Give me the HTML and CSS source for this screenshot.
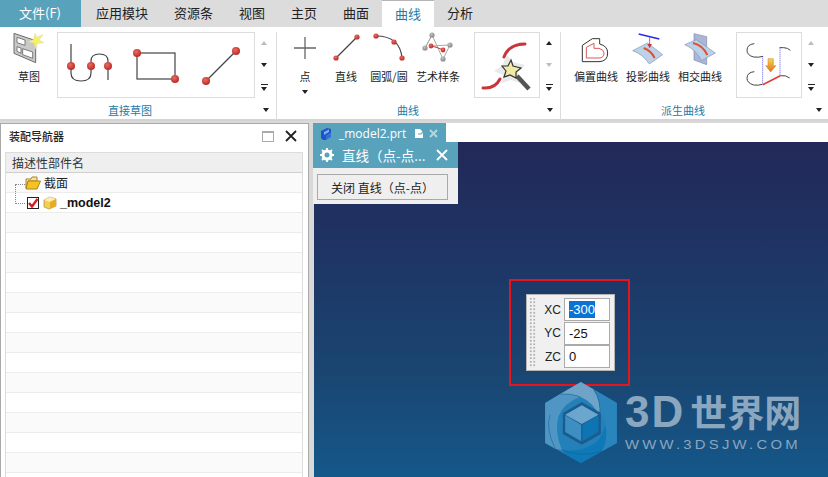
FILE: index.html
```html
<!DOCTYPE html>
<html lang="zh">
<head>
<meta charset="utf-8">
<title>NX 曲线</title>
<link rel="stylesheet" href="styles.css">
</head>
<body>
<svg class="defs" aria-hidden="true"><defs>
<radialGradient id="ball" cx="40%" cy="35%" r="70%"><stop offset="0" stop-color="#ee6a60"/><stop offset="1" stop-color="#b3261f"/></radialGradient>
<radialGradient id="gball" cx="40%" cy="35%" r="70%"><stop offset="0" stop-color="#c4c4c4"/><stop offset="1" stop-color="#808080"/></radialGradient>
<linearGradient id="arrowg" x1="0" y1="0" x2="0" y2="1"><stop offset="0" stop-color="#f7d64c"/><stop offset="1" stop-color="#e2701c"/></linearGradient>
</defs></svg>

<nav class="tabs">
  <div class="tab tab-file">文件(F)</div>
  <div class="tab">应用模块</div>
  <div class="tab">资源条</div>
  <div class="tab">视图</div>
  <div class="tab">主页</div>
  <div class="tab">曲面</div>
  <div class="tab tab-active">曲线</div>
  <div class="tab">分析</div>
</nav>

<section class="ribbon">
  <div class="group group-a">
    <div class="group-body">
      <div class="tool tool-sketch">
        <svg class="icon" width="32" height="32" viewBox="42 96 96 96">
          <path d="M45 100 110 122V188L45 160Z" fill="#c9c9c9" stroke="#6d6d6d" stroke-width="3"/>
          <path d="M54 112 78 120V136L54 128ZM54 140 66 144V160L54 154ZM71 146 101 156V175L71 164Z" fill="#fff" stroke="#666" stroke-width="2.5"/>
          <path d="M108 100 113 112 132 104 120 120 134 128 116 130 108 148 106 130 88 126 104 118Z" fill="#f5f06a" stroke="#d8d4a8" stroke-width="1.5"/>
        </svg>
        <span class="tool-label">草图</span>
      </div>
      <div class="gallery gallery-a">
        <svg width="196" height="64" viewBox="0 0 196 64">
          <path d="M13 11V40Q13 48 23 48Q33 48 33 40V28Q33 21 41.5 21Q50 21 50 28V47" fill="none" stroke="#444" stroke-width="1.2"/>
          <circle cx="13" cy="33" r="4" fill="url(#ball)"/><circle cx="33" cy="33" r="4" fill="url(#ball)"/><circle cx="50" cy="33" r="4" fill="url(#ball)"/>
          <rect x="79" y="20" width="38" height="26" fill="none" stroke="#444" stroke-width="1.2"/>
          <circle cx="79" cy="20" r="4" fill="url(#ball)"/><circle cx="117" cy="46" r="4" fill="url(#ball)"/>
          <path d="M148 48 178 18" stroke="#444" stroke-width="1.2"/>
          <circle cx="148" cy="48" r="4" fill="url(#ball)"/><circle cx="178" cy="18" r="4" fill="url(#ball)"/>
        </svg>
      </div>
      <div class="scroller">
        <i class="arrow-up dim"></i><i class="arrow-down"></i><i class="arrow-more"></i>
      </div>
    </div>
    <div class="group-foot foot-a"><span class="group-label">直接草图</span><i class="arrow-down launcher"></i></div>
  </div>

  <div class="group group-b">
    <div class="group-body">
      <div class="tool tool-point">
        <svg class="icon" width="30" height="30" viewBox="0 0 30 30"><path d="M15 4V26M4 15H26" stroke="#666" stroke-width="1.3"/></svg>
        <span class="tool-label">点</span>
        <i class="arrow-down tool-drop"></i>
      </div>
      <div class="tool tool-line">
        <svg class="icon" width="30" height="30" viewBox="0 0 30 30"><path d="M5 26 26 5" stroke="#444" stroke-width="1.2"/><circle cx="5" cy="26" r="2.6" fill="url(#ball)"/><circle cx="26" cy="5" r="2.6" fill="url(#ball)"/></svg>
        <span class="tool-label">直线</span>
      </div>
      <div class="tool tool-arc">
        <svg class="icon" width="34" height="30" viewBox="0 0 34 30"><path d="M4 4Q28 4 30 26" fill="none" stroke="#444" stroke-width="1.2"/><circle cx="4" cy="4" r="2.6" fill="url(#ball)"/><circle cx="22" cy="10" r="2.6" fill="url(#ball)"/><circle cx="30" cy="26" r="2.6" fill="url(#ball)"/></svg>
        <span class="tool-label">圆弧/圆</span>
      </div>
      <div class="tool tool-spline">
        <svg class="icon" width="34" height="30" viewBox="0 0 34 30"><path d="M4 16 11 3 22 27 29 13 10 14M11 3 4 16" fill="none" stroke="#aaa" stroke-width="1"/><path d="M10 14Q16 15 22 18" fill="none" stroke="#c33" stroke-width="1"/><circle cx="11" cy="3" r="2.6" fill="url(#gball)"/><circle cx="4" cy="16" r="2.6" fill="url(#gball)"/><circle cx="29" cy="13" r="2.6" fill="url(#gball)"/><circle cx="22" cy="27" r="2.6" fill="url(#gball)"/><circle cx="10" cy="14" r="2.4" fill="url(#ball)"/><circle cx="22" cy="18" r="2.4" fill="url(#ball)"/></svg>
        <span class="tool-label">艺术样条</span>
      </div>
      <div class="gallery gallery-b">
        <svg width="64" height="64" viewBox="0 0 64 64">
          <path d="M50 11Q34 11 29 24M25 46Q20 56 8 55" fill="none" stroke="#c8363a" stroke-width="3" stroke-linecap="round"/>
          <path d="M27 33 32 22 38 29 50 32 43 39 46 50 36 47 27 50 28 42 19 38Z" fill="#e9e9ec"/>
          <path d="M42 43 54 56" stroke="#555" stroke-width="4.5"/>
          <path d="M36 27 38 33 46 35 41 39 41 45 35 42 29 44 31 38 27 33 33 33Z" fill="#f1eaa6" stroke="#333" stroke-width="1.2"/>
        </svg>
      </div>
      <div class="scroller">
        <i class="arrow-up"></i><i class="arrow-down dim"></i><i class="arrow-more"></i>
      </div>
    </div>
    <div class="group-foot foot-b"><span class="group-label">曲线</span><i class="arrow-down launcher"></i></div>
  </div>

  <div class="group group-c">
    <div class="group-body">
      <div class="tool tool-offset">
        <svg class="icon" width="30" height="33" viewBox="96 92 90 99">
          <path d="M100 181V132L130 112H152V128Q176 134 176 155Q176 180 150 181Z" fill="#fff" stroke="#333" stroke-width="3"/>
          <path d="M112 170V138L135 126V141H150Q165 145 165 155Q165 170 150 170Z" fill="none" stroke="#d0393c" stroke-width="2.5"/>
        </svg>
        <span class="tool-label">偏置曲线</span>
      </div>
      <div class="tool tool-project">
        <svg class="icon" width="32" height="33" viewBox="248 92 96 99">
          <path d="M250 148 295 125 340 160 300 188Q280 158 250 148Z" fill="#bfd1e8" stroke="#7e95b5" stroke-width="2"/>
          <path d="M268 98 330 113" stroke="#2d2be0" stroke-width="5"/>
          <path d="M301 108V132" stroke="#c43b3b" stroke-width="2.5"/><path d="M294 128H308L301 141Z" fill="#c43b3b"/>
          <path d="M283 140Q305 148 316 170" fill="none" stroke="#e0502c" stroke-width="6"/>
        </svg>
        <span class="tool-label">投影曲线</span>
      </div>
      <div class="tool tool-cross">
        <svg class="icon" width="32" height="33" viewBox="403 92 96 99">
          <path d="M433 97 471 106V190L433 176Z" fill="#a9b6d4" stroke="#7d8cb0" stroke-width="2"/>
          <path d="M405 130 440 115 497 155 455 178Q440 145 405 130Z" fill="#bcd0e8" stroke="#7e95b5" stroke-width="2"/>
          <path d="M430 125Q460 132 473 161" fill="none" stroke="#e0502c" stroke-width="6"/>
        </svg>
        <span class="tool-label">相交曲线</span>
      </div>
      <div class="gallery gallery-c">
        <svg width="64" height="64" viewBox="560 98 192 192">
          <path d="M638 168Q625 172 610 170Q590 165 590 150Q590 132 612 130M688 142H700Q712 142 720 150M636 252Q625 256 610 254Q590 248 590 234Q590 216 612 214M690 226Q708 224 718 233" fill="none" stroke="#444" stroke-width="3"/>
          <path d="M637 168V252M689 142V226" stroke="#3a3ae0" stroke-width="2.5" stroke-dasharray="3 3"/>
          <path d="M637 253 690 226" stroke="#e23b3b" stroke-width="5"/>
          <path d="M653 175H669V196H677L661 215 646 196H653Z" fill="url(#arrowg)" stroke="#c9802c" stroke-width="1.5"/>
        </svg>
      </div>
      <div class="scroller">
        <i class="arrow-up dim"></i><i class="arrow-down"></i><i class="arrow-more"></i>
      </div>
    </div>
    <div class="group-foot foot-c"><span class="group-label">派生曲线</span><i class="arrow-down launcher"></i></div>
  </div>
</section>

<main class="workspace">
  <aside class="navigator">
    <header class="nav-head">
      <span class="nav-title">装配导航器</span>
      <span class="nav-max"></span>
      <svg class="nav-close" width="12" height="12" viewBox="0 0 12 12"><path d="M1 1 11 11M11 1 1 11" stroke="#222" stroke-width="1.8"/></svg>
    </header>
    <div class="tree">
      <div class="tree-head">描述性部件名</div>
      <div class="tree-lines"></div>
      <div class="row">
        <svg class="folder" width="16" height="14" viewBox="0 0 16 14"><path d="M1 3H6L7 1H12V5H3L1 12Z" fill="#f7e39a" stroke="#a8842a"/><path d="M3 5H15.500L12 13H1Z" fill="#f8c21c" stroke="#a8842a"/></svg>
        <span>截面</span>
      </div>
      <div class="row row-model">
        <span class="check"><svg width="10" height="10" viewBox="0 0 10 10"><path d="M1 5 4 8.500 9.500 1" fill="none" stroke="#e0141c" stroke-width="2.400"/></svg></span>
        <svg class="cube" width="14" height="14" viewBox="0 0 14 14"><path d="M7 1 13 3V10L6 13 1 11V4Z" fill="#f5cc56" stroke="#b59a4a" stroke-width=".8"/><path d="M1 4 7 6 13 3 7 1Z" fill="#fbeeb0"/><path d="M7 6V13L13 10V3Z" fill="#e6ad24"/></svg>
        <b>_model2</b>
      </div>
      <div class="row"></div><div class="row"></div><div class="row"></div><div class="row"></div><div class="row"></div><div class="row"></div><div class="row"></div><div class="row"></div><div class="row"></div><div class="row"></div><div class="row"></div><div class="row"></div><div class="row"></div>
    </div>
  </aside>

  <section class="stage">
    <div class="doc-bar">
      <div class="doc-tab">
        <svg class="doc-icon" width="14" height="14" viewBox="0 0 14 14"><path d="M2 4 8 1 12 2 12 6 7 9V13H4L2 11Z" fill="#1f54c8"/><path d="M5 5 10 2.500V5L5 8Z" fill="#7fb2ef"/><path d="M7 9 12 6.500V10L7 13Z" fill="#2f6fe0"/></svg>
        <span class="doc-name">_model2.prt</span>
        <svg class="doc-save" width="10" height="11" viewBox="0 0 10 11"><path d="M1 1H6L9 4V10H1Z" fill="#fff"/><path d="M4 6H7L9 3.500" stroke="#5ba3bd" fill="none" stroke-width="1.200"/></svg>
        <svg class="doc-close" width="9" height="9" viewBox="0 0 9 9"><path d="M1 1 8 8M8 1 1 8" stroke="#b9d3dd" stroke-width="2"/></svg>
      </div>
    </div>
    <div class="viewport">
      <div class="command">
        <div class="command-head">
          <svg width="14" height="14" viewBox="0 0 14 14"><circle cx="7" cy="7" r="4" fill="none" stroke="#fff" stroke-width="3"/><path d="M7 0V3M7 11V14M0 7H3M11 7H14M2 2 4 4M10 10 12 12M12 2 10 4M4 10 2 12" stroke="#fff" stroke-width="1.800"/></svg>
          <span class="command-title">直线（点-点...</span>
          <svg class="command-close" width="12" height="12" viewBox="0 0 12 12"><path d="M1 1 11 11M11 1 1 11" stroke="#fff" stroke-width="1.800"/></svg>
        </div>
        <div class="command-body"><button class="command-btn" type="button">关闭 直线（点-点）</button></div>
      </div>

      <div class="highlight"></div>

      <div class="coords">
        <div class="grip"></div>
        <div class="coord-rows">
          <div class="coord"><span class="coord-label">XC</span><span class="coord-input"><span class="selected">-300</span></span></div>
          <div class="coord"><span class="coord-label">YC</span><span class="coord-input">-25</span></div>
          <div class="coord"><span class="coord-label">ZC</span><span class="coord-input">0</span></div>
        </div>
      </div>

      <div class="logo">
        <svg class="logo-mark" width="72" height="81" viewBox="45 22 215 243">
          <path d="M152 22 260 85V205L152 265 45 205V85Z" fill="#2480b9"/>
          <path d="M45 85 90 58Q125 56 150 66 100 85 85 125 72 170 95 225L75 222 45 205Z" fill="#4f96c4"/>
          <path d="M152 22 190 44Q215 80 208 125 190 82 150 66 125 56 90 58Z" fill="#6fa3c7"/>
          <path d="M190 44 260 85V205L215 230Q235 190 225 150 218 120 208 125 215 80 190 44Z" fill="#2a85bd"/>
          <path d="M95 225Q150 235 195 205 215 190 225 150 235 190 215 230L152 265 105 238Z" fill="#0f78b6"/>
          <path d="M90 58Q125 56 150 66M190 44Q215 80 208 125M215 230Q150 250 95 225M75 222Q45 160 60 120" fill="none" stroke="#1b5b8d" stroke-width="1.500"/>
          <path d="M155 82 212 115V178L155 210 98 178V115Z" fill="#1b5b8d"/>
          <path d="M155 92 205 120 155 148 105 120Z" fill="#6ba6ce"/>
          <path d="M105 122 153 150V200L105 172Z" fill="#3d8fc2"/>
          <path d="M205 122 157 150V200L205 172Z" fill="#0e75b4"/>
        </svg>
        <div class="logo-text">
          <div class="logo-name"><span class="logo-3d">3D</span>世界网</div>
          <div class="logo-url">WWW.3DSJW.COM</div>
        </div>
      </div>
    </div>
  </section>
</main>
</body>
</html>
```

FILE: styles.css
```css
* { box-sizing: border-box; }
html, body { margin: 0; width: 828px; height: 477px; overflow: hidden; }
body {
  position: relative;
  background: #d9d9d9;
  color: #222;
  font-family: "Noto Sans CJK SC", "Noto Sans", sans-serif;
  font-size: 11px;
  display: flex;
  flex-direction: column;
}
.defs { position: absolute; width: 0; height: 0; }
svg { display: block; flex: none; }

/* Tabs */
.tabs { display: flex; height: 27px; background: #dcdcdc; flex: none; }
.tab { padding: 0 13px; font-size: 13px; line-height: 26px; color: #222; }
.tab-file { width: 81px; margin-right: 2px; padding: 0 0 0 19px; background: #59a2bc; color: #fff; }
.tab-active { background: #fff; color: #1b7ba6; border-top: 1px solid #b5b5b5; line-height: 25px; }

/* Ribbon */
.ribbon { display: flex; height: 94px; background: #fff; border-bottom: 2px solid #d4d4d4; flex: none; padding-top: 5px; }
.group { display: flex; flex-direction: column; border-right: 1px solid #dcdcdc; height: 88px; }
.group-a { width: 277px; }
.group-b { width: 284px; }
.group-c { width: 267px; border-right: 0; }
.group-body { display: flex; height: 66px; }
.group-foot { display: flex; align-items: center; height: 22px; padding-top: 2px; }
.foot-a { padding-left: 108px; padding-right: 7px; }
.foot-b { padding-left: 120px; padding-right: 7px; }
.foot-c { padding-left: 100px; padding-right: 6px; }
.group-label { color: #1b7ba6; line-height: 14px; font-size: 11px; }
.launcher { margin-left: auto; }

.tool { display: flex; flex-direction: column; align-items: center; }
.tool-label { font-size: 11px; line-height: 14px; white-space: nowrap; }
.tool-sketch { width: 36px; margin: 0 10px 0 11px; }
.tool-sketch .icon { margin-bottom: 5px; }
.tool-point { width: 40px; margin-left: 8px; }
.tool-point .icon { margin-top: 1px; margin-bottom: 6px; }
.tool-drop { margin-top: 7px; }
.tool-line { width: 42px; }
.tool-line .icon { margin-bottom: 7px; }
.tool-arc { width: 44px; }
.tool-arc .icon { margin-bottom: 7px; }
.tool-spline { width: 54px; }
.tool-spline .icon { margin-bottom: 7px; }
.tool-offset, .tool-project, .tool-cross { width: 52px; }
.tool-offset { margin-left: 9px; }
.tool-offset .icon, .tool-project .icon, .tool-cross .icon { margin-bottom: 4px; }

.gallery { width: 66px; height: 66px; border: 1px solid #dcdcdc; display: flex; align-items: center; justify-content: center; }
.gallery-a { width: 198px; }
.gallery-b { margin-left: 9px; }
.gallery-c { margin-left: 10px; }

.scroller { width: 10px; height: 66px; margin-left: 4px; display: flex; flex-direction: column; align-items: center; justify-content: space-between; padding: 9px 0 7px; }
i { display: block; flex: none; }
.arrow-up, .arrow-down { width: 0; height: 0; border-left: 3.500px solid transparent; border-right: 3.500px solid transparent; }
.arrow-up { border-bottom: 4px solid #222; }
.arrow-down { border-top: 4px solid #222; }
.arrow-up.dim { border-bottom-color: #bdbdbd; }
.arrow-down.dim { border-top-color: #bdbdbd; }
.arrow-more { width: 7px; height: 7px; border-top: 1px solid #222; }
.arrow-more::after { content: ""; display: block; margin-top: 2px; width: 0; height: 0; border-left: 3.500px solid transparent; border-right: 3.500px solid transparent; border-top: 4px solid #222; }

/* Workspace */
.workspace { flex: 1; display: flex; min-height: 0; padding-top: 2px; }
.navigator { width: 309px; margin-right: 4px; background: #fff; border: 1px solid #a9a9a9; border-bottom: 0; padding: 0 0 0 4px; display: flex; flex-direction: column; overflow: hidden; }
.nav-head { display: flex; align-items: center; height: 28px; flex: none; padding: 0 11px 4px 4px; }
.nav-title { font-weight: 500; font-size: 11px; color: #222; margin-right: auto; }
.nav-max { width: 12px; height: 11px; border: 1px solid #aaa; border-top-width: 2px; margin-right: 11px; }
.tree { position: relative; width: 298px; flex: 1; border: 1px solid #dcdcdc; border-bottom: 0; }
.tree-head { height: 20px; background: #efefef; border-bottom: 1px solid #cfcfcf; font-size: 12px; line-height: 19px; padding-left: 6px; color: #333; }
.tree-lines { position: absolute; left: 9px; top: 31px; width: 10px; height: 20px; border: 1px dotted #888; border-right: 0; }
.row { height: 20px; display: flex; align-items: center; border-bottom: 1px solid #ececec; font-size: 12px; padding-left: 19px; }
.row:nth-of-type(even) { background: #fff; }
.row:nth-of-type(odd) { background: #fafafa; }
.folder { margin-right: 3px; }
.row-model { padding-left: 21px; }
.check { width: 12px; height: 12px; border: 1px solid #222; background: #fff; display: flex; align-items: center; justify-content: center; margin-right: 4px; }
.cube { margin-right: 3px; }
.row-model b { font-family: "Liberation Sans", sans-serif; font-size: 12.500px; font-weight: 700; color: #111; }

.stage { flex: 1; display: flex; flex-direction: column; min-width: 0; }
.doc-bar { height: 19px; background: #fff; flex: none; }
.doc-tab { width: 133px; height: 21px; background: #59a2bc; display: flex; align-items: center; color: #fff; padding-left: 6px; position: relative; }
.doc-icon { margin-right: 6px; }
.doc-name { font-family: "Open Sans", "Noto Sans", sans-serif; font-size: 12px; width: 75px; }
.doc-save { margin-right: 5px; }
.viewport { position: relative; flex: 1; margin-left: 1px; background: linear-gradient(#222958 0%, #1f3161 25%, #1a4672 70%, #14588a 100%); }
.command { position: absolute; left: -1px; top: 0; width: 145px; }
.command-head { height: 26px; background: #59a2bc; color: #fff; display: flex; align-items: center; padding: 0 10px 0 7px; }
.command-title { font-size: 13.500px; margin-left: 8px; white-space: nowrap; margin-right: auto; }
.command-body { height: 36px; background: #efefef; padding: 6px 10px 0 4px; }
.command-btn { width: 131px; height: 26px; padding: 0; background: #efefef; border: 1px solid #a9a9a9; border-radius: 0; font-family: inherit; font-size: 12px; color: #222; }

.highlight { position: absolute; left: 195px; top: 137px; width: 121px; height: 107px; border: 2px solid #e5141f; }
.coords { position: absolute; left: 212px; top: 152px; width: 89px; height: 77px; background: #f0f0f0; border: 1px solid #b5b5b5; display: flex; }
.grip { width: 7px; margin: 2px 0 2px 2px; background-image: radial-gradient(circle at center, #b0b0b0 1px, transparent 1.100px); background-size: 3.500px 3.500px; }
.coord-rows { flex: 1; display: flex; flex-direction: column; padding: 3px 4px 0 0; }
.coord { display: flex; align-items: center; height: 23.500px; justify-content: flex-end; }
.coord-label { font-size: 12px; font-family: "Liberation Sans", sans-serif; color: #222; margin-right: 3px; }
.coord-input { width: 46px; height: 23px; background: #fff; border: 1px solid #aaa; font-family: "Liberation Sans", sans-serif; font-size: 13px; padding-left: 4px; line-height: 21px; color: #111; }
.selected { display: inline-block; background: #0a74d4; color: #fff; line-height: 17px; margin-top: 2px; vertical-align: top; }

.logo { position: absolute; left: 231px; top: 240px; display: flex; }
.logo-mark { margin-right: 8px; }
.logo-text { padding-top: 9px; }
.logo-name { font-family: "Liberation Sans", "Noto Sans CJK SC", sans-serif; font-weight: 700; font-size: 37px; line-height: 42px; height: 42px; color: #8ba7bf; white-space: nowrap; }
.logo-3d { font-size: 44px; line-height: 42px; letter-spacing: 2px; margin-right: 5px; }
.logo-url { font-family: "Liberation Sans", sans-serif; font-size: 12px; letter-spacing: 2.600px; color: #8ba7bf; line-height: 14px; margin-top: 5px; white-space: nowrap; transform: scaleX(1.24); transform-origin: left center; }
```
